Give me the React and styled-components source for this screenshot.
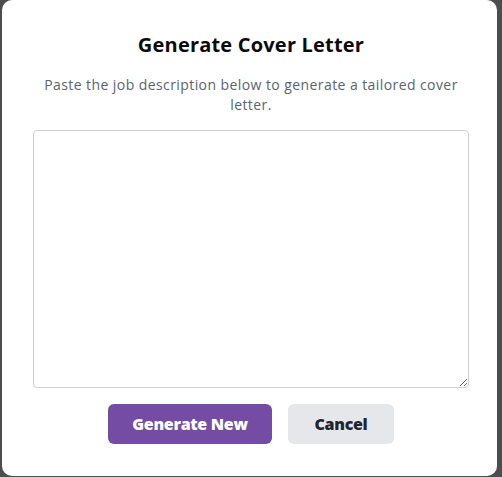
import React from "react";
import styled, { createGlobalStyle } from "styled-components";

const GlobalStyle = createGlobalStyle`
    html, body {
        margin: 0;
        padding: 0;
        background: #4d4d4d;
        font-family: "Open Sans", "Liberation Sans", sans-serif;
    }
`;

const Backdrop = styled.div`
    width: 502px;
    height: 477px;
    display: flex;
    align-items: flex-start;
    padding-left: 2px;
    box-sizing: border-box;
`;

const Modal = styled.div`
    width: 495px;
    height: 476px;
    background: #ffffff;
    border-radius: 10px;
    box-sizing: border-box;
    padding: 30px 28px 0 31px;
    display: flex;
    flex-direction: column;
    align-items: center;
`;

const Title = styled.h2`
    margin: 0;
    font-family: "Open Sans", sans-serif;
    font-weight: 700;
    font-size: 20px;
    line-height: 30px;
    color: #0b0b0b;
    letter-spacing: 0.2px;
`;

const Subtitle = styled.p`
    margin: 15px 0 0;
    max-width: 436px;
    text-align: center;
    font-size: 14px;
    line-height: 20px;
    letter-spacing: 0.42px;
    color: #5a6372;
`;

const TextArea = styled.textarea`
    margin-top: 15px;
    width: 436px;
    height: 258px;
    box-sizing: border-box;
    border: 1px solid #d0d0d0;
    border-radius: 4px;
    resize: vertical;
    font-family: inherit;
    font-size: 14px;
    padding: 8px;
    outline: none;
`;

const Actions = styled.div`
    margin-top: 16px;
    display: flex;
    gap: 16px;
`;

const Button = styled.button`
    height: 40px;
    width: ${(p) => p.width}px;
    border: none;
    border-radius: 6px;
    font-family: "Open Sans", sans-serif;
    font-weight: 800;
    font-size: 16px;
    letter-spacing: -0.3px;
    background: ${(p) => (p.primary ? "#744ca4" : "#e6e7ea")};
    color: ${(p) => (p.primary ? "#ffffff" : "#1f2430")};
    cursor: pointer;
`;

export default function App() {
    return (
        <>
            <GlobalStyle />
            <Backdrop>
                <Modal>
                    <Title>Generate Cover Letter</Title>
                    <Subtitle>
                        Paste the job description below to generate a tailored cover letter.
                    </Subtitle>
                    <TextArea />
                    <Actions>
                        <Button primary width={164}>Generate New</Button>
                        <Button width={106}>Cancel</Button>
                    </Actions>
                </Modal>
            </Backdrop>
        </>
    );
}
